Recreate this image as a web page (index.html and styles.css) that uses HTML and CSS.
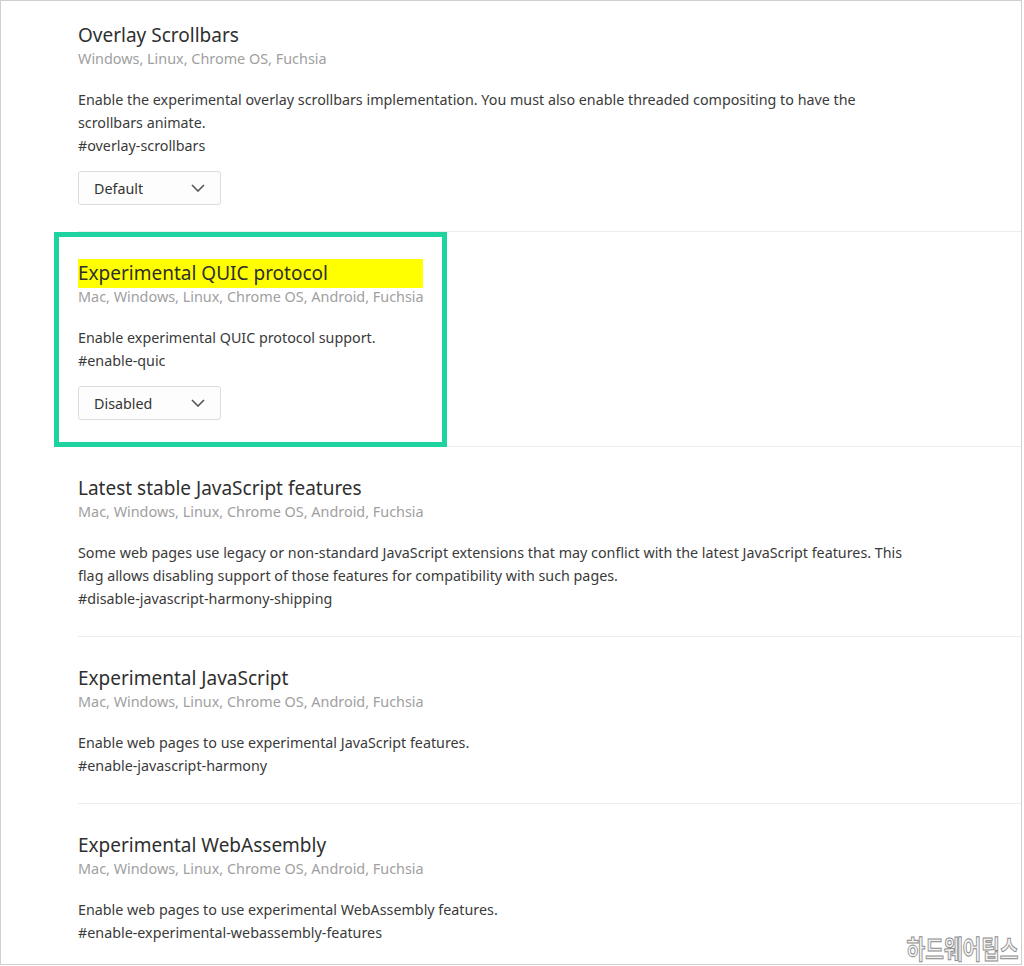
FILE: index.html
```html
<!DOCTYPE html>
<html lang="en">
<head>
    <meta charset="UTF-8">
    <meta name="viewport" content="width=device-width, initial-scale=1.0">
    <title>Experiments</title>
    <link rel="stylesheet" href="styles.css">
</head>
<body>

    <div class="page">
        <div class="experiments">

            <div class="experiment">
                <h2 class="title">Overlay Scrollbars</h2>
                <p class="platforms">Windows, Linux, Chrome OS, Fuchsia</p>
                <div class="desc">
                    <p>Enable the experimental overlay scrollbars implementation. You must also enable threaded compositing to have the scrollbars animate.</p>
                    <p>#overlay-scrollbars</p>
                </div>
                <div class="select">
                    <span>Default</span>
                    <svg class="chevron" width="14" height="8" viewBox="0 0 14 8"><path d="M1 1 L7 7 L13 1" fill="none" stroke="#555" stroke-width="1.6"/></svg>
                </div>
            </div>

            <div class="experiment">
                <!-- annotation box around this flag -->
                <div class="marker"></div>
                <h2 class="title"><span class="highlight">Experimental QUIC protocol</span></h2>
                <p class="platforms">Mac, Windows, Linux, Chrome OS, Android, Fuchsia</p>
                <div class="desc">
                    <p>Enable experimental QUIC protocol support.</p>
                    <p>#enable-quic</p>
                </div>
                <div class="select">
                    <span>Disabled</span>
                    <svg class="chevron" width="14" height="8" viewBox="0 0 14 8"><path d="M1 1 L7 7 L13 1" fill="none" stroke="#555" stroke-width="1.6"/></svg>
                </div>
            </div>

            <div class="experiment">
                <h2 class="title">Latest stable JavaScript features</h2>
                <p class="platforms">Mac, Windows, Linux, Chrome OS, Android, Fuchsia</p>
                <div class="desc">
                    <p>Some web pages use legacy or non-standard JavaScript extensions that may conflict with the latest JavaScript features. This flag allows disabling support of those features for compatibility with such pages.</p>
                    <p>#disable-javascript-harmony-shipping</p>
                </div>
            </div>

            <div class="experiment">
                <h2 class="title">Experimental JavaScript</h2>
                <p class="platforms">Mac, Windows, Linux, Chrome OS, Android, Fuchsia</p>
                <div class="desc">
                    <p>Enable web pages to use experimental JavaScript features.</p>
                    <p>#enable-javascript-harmony</p>
                </div>
            </div>

            <div class="experiment">
                <h2 class="title">Experimental WebAssembly</h2>
                <p class="platforms">Mac, Windows, Linux, Chrome OS, Android, Fuchsia</p>
                <div class="desc">
                    <p>Enable web pages to use experimental WebAssembly features.</p>
                    <p>#enable-experimental-webassembly-features</p>
                </div>
            </div>

        </div>

        <div class="watermark">하드웨어팁스</div>
    </div>

</body>
</html>
```

FILE: styles.css
```css
body {
    margin: 0;
    background: #fff;
    font-family: "Noto Sans", "Open Sans", sans-serif;
}
.page {
    position: relative;
    width: 1020px;
    height: 963px;
    border: 1px solid #d0d0d0;
    overflow: hidden;
    background: #fff;
}
.experiment {
    position: relative;
    margin-left: 77px;
    padding: 29px 0 26px;
    border-bottom: 1px solid #ececec;
}
.experiment:first-child {
    padding-top: 22px;
}
.experiment:last-child {
    border-bottom: none;
}
.title {
    margin: 0;
    font-size: 19px;
    line-height: 24px;
    font-weight: normal;
    color: #2f2f2f;
}
.highlight {
    display: inline-block;
    width: 345px;
    padding: 2px 0 3px;
    margin: -2px 0 -3px;
    background: #ffff00;
}
.platforms {
    margin: 0;
    font-size: 14.4px;
    line-height: 24px;
    color: #a0a0a0;
}
.desc {
    margin-top: 17px;
    max-width: 840px;
    font-size: 14.3px;
    line-height: 23px;
    color: #3a3a3a;
}
.desc p {
    margin: 0;
}
.select {
    margin-top: 14px;
    width: 143px;
    height: 34px;
    box-sizing: border-box;
    display: flex;
    align-items: center;
    justify-content: space-between;
    padding: 0 15px;
    border: 1px solid #dcdcdc;
    border-radius: 3px;
    background: #fdfdfd;
    font-size: 14.3px;
    color: #333;
}
.chevron {
    display: block;
}

/* annotation overlays */
.marker {
    position: absolute;
    left: -24px;
    top: 0;
    bottom: -1px;
    width: 393px;
    box-sizing: border-box;
    border: 5px solid #1dd3a0;
}
.watermark {
    position: absolute;
    right: 2px;
    bottom: 2px;
    font-family: "Noto Sans CJK KR", sans-serif;
    font-size: 26px;
    font-weight: bold;
    line-height: 28px;
    color: #f2f2f2;
    -webkit-text-stroke: 1px #8c8c8c;
    transform: scaleX(0.78);
    transform-origin: right bottom;
}
```
